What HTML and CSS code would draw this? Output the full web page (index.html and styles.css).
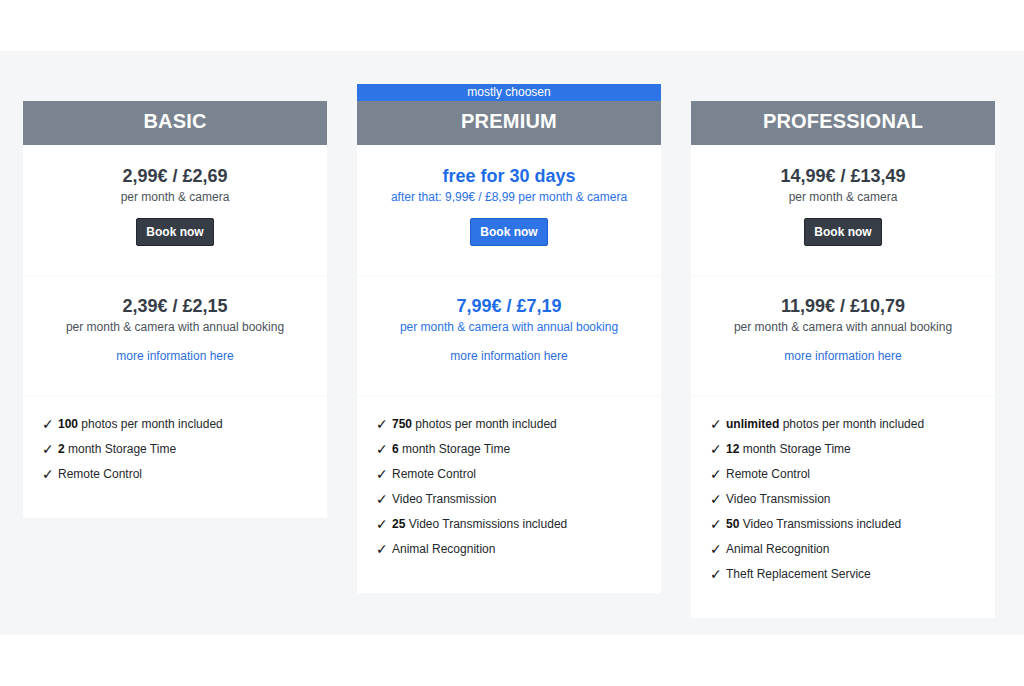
FILE: index.html
```html
<!DOCTYPE html>
<html lang="en">
<head>
<meta charset="utf-8">
<title>Pricing</title>
<link rel="stylesheet" href="styles.css">
</head>
<body>
<div class="top"></div>
<section class="pricing">
  <div class="card card--offset">
    <div class="card-head">BASIC</div>
    <div class="block">
      <div class="price">2,99€ / £2,69</div>
      <div class="sub">per month &amp; camera</div>
      <a class="btn btn--dark" href="#">Book now</a>
    </div>
    <div class="block block--annual">
      <div class="price">2,39€ / £2,15</div>
      <div class="sub">per month &amp; camera with annual booking</div>
      <a class="more" href="#">more information here</a>
    </div>
    <ul class="features">
      <li><b>100</b> photos per month included</li>
      <li><b>2</b> month Storage Time</li>
      <li>Remote Control</li>
    </ul>
  </div>

  <div class="card card--featured">
    <div class="badge">mostly choosen</div>
    <div class="card-head">PREMIUM</div>
    <div class="block">
      <div class="price price--blue">free for 30 days</div>
      <div class="sub sub--blue">after that: 9,99€ / £8,99 per month &amp; camera</div>
      <a class="btn btn--blue" href="#">Book now</a>
    </div>
    <div class="block block--annual">
      <div class="price price--blue">7,99€ / £7,19</div>
      <div class="sub sub--blue">per month &amp; camera with annual booking</div>
      <a class="more" href="#">more information here</a>
    </div>
    <ul class="features">
      <li><b>750</b> photos per month included</li>
      <li><b>6</b> month Storage Time</li>
      <li>Remote Control</li>
      <li>Video Transmission</li>
      <li><b>25</b> Video Transmissions included</li>
      <li>Animal Recognition</li>
    </ul>
  </div>

  <div class="card card--offset">
    <div class="card-head">PROFESSIONAL</div>
    <div class="block">
      <div class="price">14,99€ / £13,49</div>
      <div class="sub">per month &amp; camera</div>
      <a class="btn btn--dark" href="#">Book now</a>
    </div>
    <div class="block block--annual">
      <div class="price">11,99€ / £10,79</div>
      <div class="sub">per month &amp; camera with annual booking</div>
      <a class="more" href="#">more information here</a>
    </div>
    <ul class="features">
      <li><b>unlimited</b> photos per month included</li>
      <li><b>12</b> month Storage Time</li>
      <li>Remote Control</li>
      <li>Video Transmission</li>
      <li><b>50</b> Video Transmissions included</li>
      <li>Animal Recognition</li>
      <li>Theft Replacement Service</li>
    </ul>
  </div>
</section>
</body>
</html>
```
FILE: styles.css
```css
* { box-sizing: border-box; }
html, body {
  margin: 0;
  padding: 0;
  background: #ffffff;
  font-family: "Liberation Sans", Arial, Helvetica, sans-serif;
  color: #212529;
}
.top { height: 51px; }
.pricing {
  background: #f5f6f8;
  display: grid;
  grid-template-columns: repeat(3, 304px);
  column-gap: 30px;
  align-items: start;
  padding: 33px 0 17px 23px;
  height: 584px;
}
.card {
  background: #ffffff;
  display: flex;
  flex-direction: column;
}
.card--offset { margin-top: 17px; }
.badge {
  height: 17px;
  background: #2f74e6;
  color: #ffffff;
  font-size: 12px;
  line-height: 17px;
  text-align: center;
}
.card-head {
  height: 44px;
  background: #7a8490;
  color: #ffffff;
  font-size: 20px;
  font-weight: bold;
  line-height: 40px;
  padding-bottom: 4px;
  text-align: center;
  letter-spacing: 0.2px;
}
.block {
  display: flex;
  flex-direction: column;
  align-items: center;
  text-align: center;
  padding: 20px 10px 29px;
}
.block--annual {
  border-top: 2px solid #fafbfb;
  padding: 18px 10px 30px;
}
.price {
  font-size: 18px;
  font-weight: bold;
  line-height: 22px;
  color: #363d47;
}
.price--blue { color: #1d6ce6; }
.sub {
  font-size: 12px;
  line-height: 18px;
  color: #4b525a;
  margin-top: 1px;
}
.sub--blue { color: #2a72e6; }
.btn {
  display: inline-block;
  margin-top: 12px;
  height: 28px;
  line-height: 26px;
  padding: 0 9px;
  border-radius: 2px;
  font-size: 12px;
  font-weight: bold;
  color: #ffffff;
  text-decoration: none;
}
.btn--dark {
  background: #363d46;
  border: 1px solid #23282e;
}
.btn--blue {
  background: #2f74e6;
  border: 1px solid #1c5fcf;
}
.more {
  margin-top: 11px;
  font-size: 12px;
  line-height: 18px;
  color: #2a6fdd;
  text-decoration: none;
}
.features {
  list-style: none;
  margin: 0;
  padding: 15px 10px 31px 19px;
  border-top: 2px solid #fafbfb;
}
.features li {
  display: flex;
  align-items: center;
  height: 25px;
  font-size: 12px;
  line-height: 25px;
  color: #25282c;
  white-space: pre;
}
.features li::before {
  content: "✓";
  width: 16px;
  color: #111;
  font-family: "DejaVu Sans", sans-serif;
  font-size: 14px;
  line-height: 25px;
}
.features b { font-weight: bold; color: #111; }
```
